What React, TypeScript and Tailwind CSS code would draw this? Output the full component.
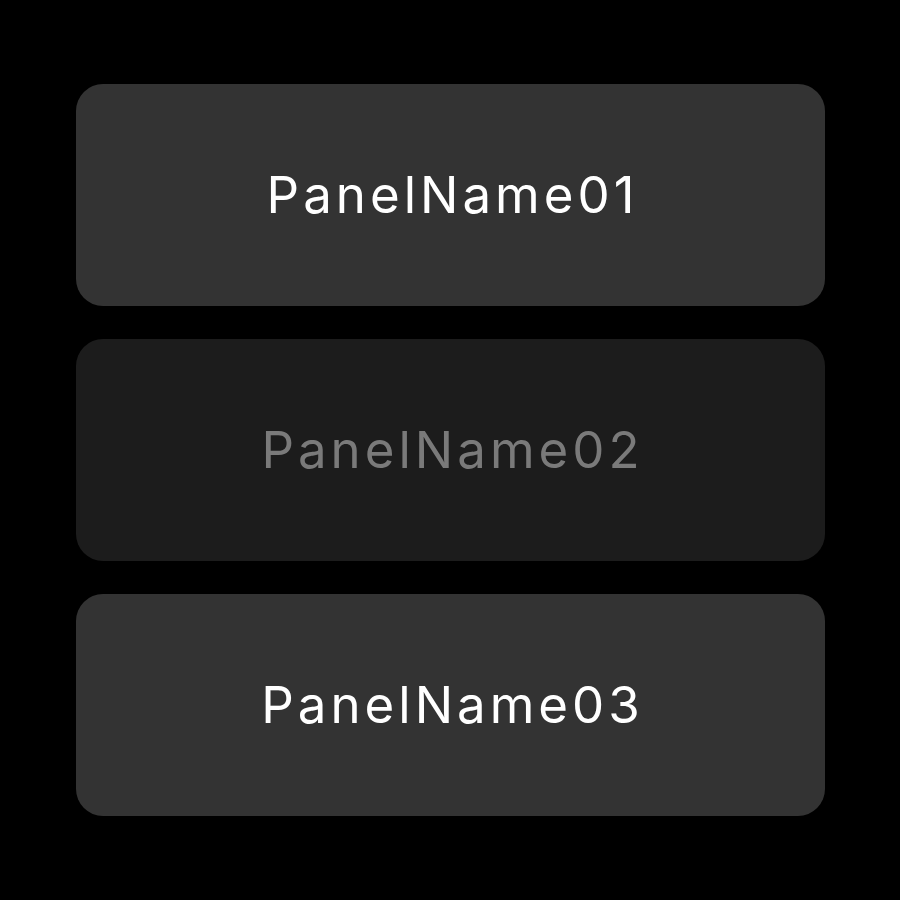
import React from "react";

interface Panel {
  name: string;
  active: boolean;
}

const panels: Panel[] = [
  { name: "PanelName01", active: true },
  { name: "PanelName02", active: false },
  { name: "PanelName03", active: true },
];

export default function App() {
  return (
    <div className="flex h-[900px] w-[900px] flex-col gap-[33px] bg-black px-[76px] pt-[84px] font-['Inter','Noto_Sans',sans-serif]">
      {panels.map((p) => (
        <div
          key={p.name}
          className={
            p.active
              ? "flex h-[222px] w-[749px] items-center justify-center rounded-[27px] bg-[#333333] pl-[4px] text-[51px] tracking-[4px] text-white"
              : "flex h-[222px] w-[749px] items-center justify-center rounded-[27px] bg-[#1c1c1c] pl-[4px] text-[51px] tracking-[4px] text-[#7a7a7a]"
          }
        >
          {p.name}
        </div>
      ))}
    </div>
  );
}
